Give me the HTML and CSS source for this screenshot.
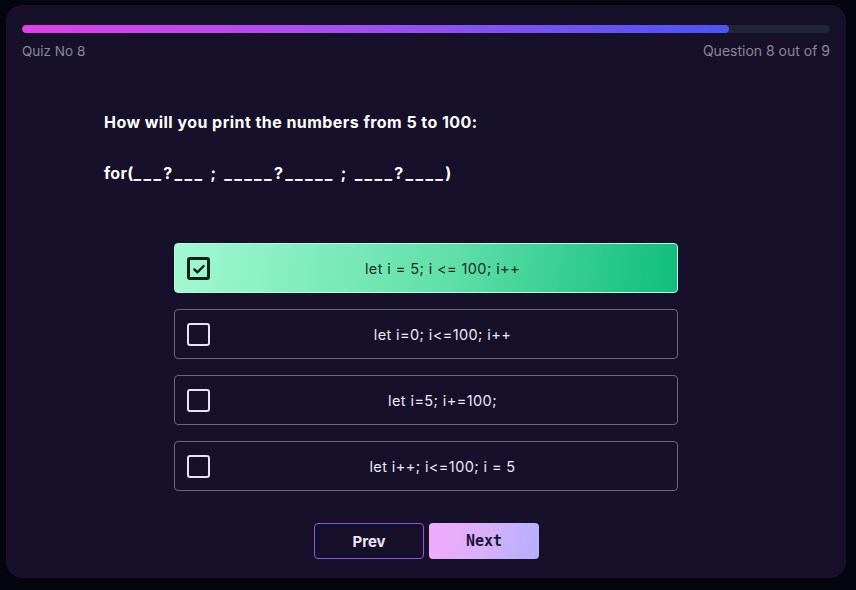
FILE: index.html
```html
<!DOCTYPE html>
<html>
<head>
<meta charset="utf-8">
<link rel="stylesheet" href="styles.css">
</head>
<body>
<div class="card">
  <div class="progress"><div class="progress-fill" style="width: 87.5%"></div></div>
  <div class="meta">
    <span>Quiz No 8</span>
    <span>Question 8 out of 9</span>
  </div>
  <div class="question">
    <p class="q-title">How will you print the numbers from 5 to 100:</p>
    <p class="q-code">for(<span class="blanks">___?___ ; _____?_____ ; ____?____</span>)</p>
  </div>
  <div class="options">
    <div class="option selected">
      <span class="box"><svg viewBox="0 0 24 24" width="16" height="16"><path d="M5 12.5l4.5 4.5L19 7.5" fill="none" stroke="#0f1a17" stroke-width="3.4" stroke-linecap="round" stroke-linejoin="round"/></svg></span>
      <span class="label">let i = 5; i &lt;= 100; i++</span>
    </div>
    <div class="option">
      <span class="box"></span>
      <span class="label">let i=0; i&lt;=100; i++</span>
    </div>
    <div class="option">
      <span class="box"></span>
      <span class="label">let i=5; i+=100;</span>
    </div>
    <div class="option">
      <span class="box"></span>
      <span class="label">let i++; i&lt;=100; i = 5</span>
    </div>
  </div>
  <div class="nav">
    <button class="btn prev">Prev</button>
    <button class="btn next">Next</button>
  </div>
</div>
</body>
</html>
```

FILE: styles.css
```css
* { box-sizing: border-box; }
html, body { margin: 0; padding: 0; }
body {
  background: #05050f;
  width: 856px;
  height: 590px;
  padding: 5px 10px 12px 6px;
  font-family: Inter, "Open Sans", sans-serif;
}
.card {
  background: #16102b;
  border-radius: 16px;
  height: 573px;
  padding: 20px 16px 0 16px;
  display: flex;
  flex-direction: column;
}
.progress {
  height: 8px;
  border-radius: 4px;
  background: #1f2638;
  overflow: hidden;
}
.progress-fill {
  height: 100%;
  border-radius: 4px;
  background: linear-gradient(90deg, #e23ee8 0%, #a64ff2 45%, #4a55f5 100%);
}
.meta {
  display: flex;
  justify-content: space-between;
  margin-top: 9px;
  font-size: 14px;
  color: #8c8799;
  line-height: 18px;
}
.meta span:first-child { font-size: 13.5px; }
.question {
  padding-left: 82px;
  margin-top: 52px;
  color: #ffffff;
  font-weight: 700;
  font-size: 16px;
}
.q-title { margin: 0; line-height: 20px; letter-spacing: 0.45px; }
.q-code { margin: 31px 0 0 0; line-height: 20px; letter-spacing: 0.3px; }
.blanks { letter-spacing: 2.3px; }
.options {
  margin: 60px auto 0 auto;
  width: 504px;
  display: flex;
  flex-direction: column;
  gap: 16px;
}
.option {
  height: 50px;
  border: 1px solid #6b6580;
  border-radius: 4px;
  display: flex;
  align-items: center;
  padding-left: 12px;
  padding-top: 1px;
  color: #ece8f5;
  font-size: 14.5px;
  letter-spacing: 0.4px;
}
.option.selected {
  border-color: #bff5dc;
  background: linear-gradient(100deg, #a2f9d2 0%, #5fdfa9 55%, #10bd7d 100%);
  color: #1c2a26;
}
.box {
  width: 23px;
  height: 23px;
  border: 2.5px solid #ebe0f7;
  border-radius: 3px;
  display: flex;
  align-items: center;
  justify-content: center;
  flex-shrink: 0;
}
.option.selected .box {
  border: 3px solid #12201c;
}
.label {
  flex: 1;
  text-align: center;
  padding-right: 2px;
}
.nav {
  display: flex;
  justify-content: center;
  gap: 5px;
  margin-top: 32px;
  padding-left: 1px;
}
.btn {
  width: 110px;
  height: 36px;
  border-radius: 4px;
  font-size: 15px;
  font-weight: 700;
  cursor: pointer;
}
.prev {
  background: transparent;
  border: 1px solid #8a55e0;
  color: #ece6f7;
  font-family: Inter, sans-serif;
}
.next {
  border: none;
  background: linear-gradient(100deg, #f3aafa 0%, #d8b0fb 50%, #b2b0fd 100%);
  color: #1a1630;
  font-family: "DejaVu Sans Mono", monospace;
}
```
